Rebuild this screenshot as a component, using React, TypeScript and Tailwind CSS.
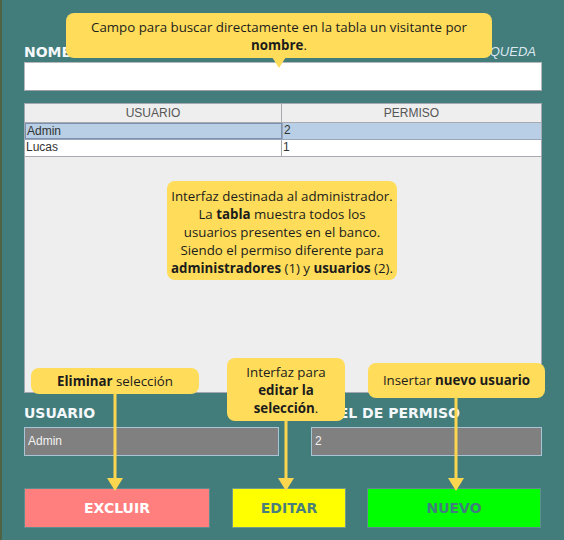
import React from "react";

const label = "font-['DejaVu_Sans',sans-serif] font-bold text-[14px] leading-[16px] text-[#f4f8fa]";
const callout = "absolute bg-[#ffdc5a] rounded-[8px] text-center text-[#1c1c1c] font-['Open_Sans',sans-serif] text-[13.3px] leading-[18px]";

function Arrow({ x, top, bottom }: { x: number; top: number; bottom: number }) {
    const h = bottom - top;
    return (
        <svg
            className="absolute"
            style={{ left: x - 9, top }}
            width={18}
            height={h}
            viewBox={`0 0 18 ${h}`}
        >
            <rect x={7.5} y={0} width={3} height={h - 11} fill="#fdd650" />
            <polygon points={`1,${h - 13} 17,${h - 13} 9,${h}`} fill="#fdd650" />
        </svg>
    );
}

function Table() {
    const cell = "h-[16px] leading-[15px] text-[12px] text-[#333] pl-[1px] font-['Liberation_Sans',sans-serif]";
    return (
        <div className="mt-[12px] h-[290px] border border-[#a4a8b0] bg-[#eeeeee]">
            <div className="grid grid-cols-[257px_1fr] h-[19px] border-b border-[#a8aab0]">
                <div className="border-r border-[#a8aab0] text-center text-[12px] leading-[19px] text-[#555] font-['Liberation_Sans',sans-serif]">USUARIO</div>
                <div className="text-center text-[12px] leading-[19px] text-[#555] font-['Liberation_Sans',sans-serif]">PERMISO</div>
            </div>
            <div className="grid grid-cols-[257px_1fr] bg-[#b8cfe5] border-b border-[#9aa6b8]">
                <div className={`${cell} border border-[#7c90b0]`}>Admin</div>
                <div className={`${cell} border-l border-[#9aa6b8]`}>2</div>
            </div>
            <div className="grid grid-cols-[257px_1fr] bg-white border-b border-[#a8aab0]">
                <div className={`${cell} border-r border-[#a8aab0]`}>Lucas</div>
                <div className={cell}>1</div>
            </div>
        </div>
    );
}

export default function App() {
    return (
        <div className="relative w-[564px] h-[540px] bg-[#427d7b] overflow-hidden">
            <div className="absolute left-0 top-0 w-[2px] h-full bg-[#4f6244]" />
            <div className="pl-[24px] pr-[22px] pt-[44px]">
                <div className="flex justify-between items-end h-[16px]">
                    <span className={label}>NOMBRE</span>
                    <span className="italic text-[13px] leading-[16px] text-[#dce8f0] font-['Liberation_Sans',sans-serif] mr-[6px]">FILTRO DE BÚSQUEDA</span>
                </div>
                <div className="mt-[2px] h-[29px] bg-white border border-[#b4b8bc] border-b-[#9ca0a4]" />

                <Table />

                <div className="grid grid-cols-[287px_1fr] mt-[12px]">
                    <span className={label}>USUARIO</span>
                    <span className={label}>NIVEL DE PERMISO</span>
                </div>
                <div className="grid grid-cols-[287px_1fr] mt-[6px]">
                    <div className="w-[255px] h-[29px] bg-[#808080] border border-[#a8c4d6] pl-[3px] text-[12px] leading-[27px] text-[#f2f2f2] font-['Liberation_Sans',sans-serif]">Admin</div>
                    <div className="h-[29px] bg-[#808080] border border-[#a8c4d6] pl-[3px] text-[12px] leading-[27px] text-[#f2f2f2] font-['Liberation_Sans',sans-serif]">2</div>
                </div>

                <div className="flex mt-[32px] font-['DejaVu_Sans',sans-serif] font-bold text-[14px]">
                    <button className="w-[186px] h-[40px] bg-[#ff7f7f] border border-[#5f8c8c] text-white">EXCLUIR</button>
                    <button className="ml-[22px] w-[114px] h-[40px] bg-[#ffff00] border border-[#6f9a8c] text-[#4a7f7c]">EDITAR</button>
                    <button className="ml-[21px] w-[174px] h-[40px] bg-[#00ff00] border border-[#5f8c8c] text-[#3f7f7c]">NUEVO</button>
                </div>
            </div>

            <div className={`${callout} left-[66px] top-[13px] w-[426px] h-[45px] pt-[5px]`}>
                Campo para buscar directamente en la tabla un visitante por
                <br />
                <b>nombre</b>.
                <svg className="absolute left-[206px] top-[44px]" width={14} height={11} viewBox="0 0 14 11">
                    <polygon points="0,0 14,0 7,11" fill="#ffdc5a" />
                </svg>
            </div>

            <div className={`${callout} left-[167px] top-[181px] w-[230px] h-[99px] pt-[6px]`}>
                Interfaz destinada al administrador.
                <br />
                La <b>tabla</b> muestra todos los
                <br />
                usuarios presentes en el banco.
                <br />
                Siendo el permiso diferente para
                <br />
                <b>administradores</b> (1) y <b>usuarios</b> (2).
            </div>

            <Arrow x={115} top={393} bottom={491} />
            <Arrow x={286} top={420} bottom={491} />
            <Arrow x={456} top={397} bottom={491} />

            <div className={`${callout} left-[31px] top-[368px] w-[168px] h-[26px] leading-[26px]`}>
                <b>Eliminar</b> selección
            </div>

            <div className={`${callout} left-[227px] top-[358px] w-[118px] h-[63px] pt-[5px]`}>
                Interfaz para
                <br />
                <b>editar la</b>
                <br />
                <b>selección</b>.
            </div>

            <div className={`${callout} left-[368px] top-[363px] w-[177px] h-[35px] leading-[35px]`}>
                Insertar <b>nuevo usuario</b>
            </div>
        </div>
    );
}
